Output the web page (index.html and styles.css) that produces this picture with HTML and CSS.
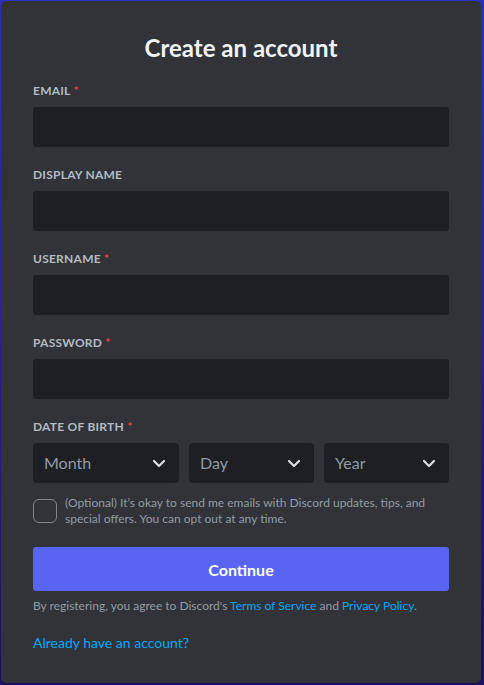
FILE: index.html
```html
<!DOCTYPE html>
<html lang="en">
<head>
    <meta charset="UTF-8">
    <meta name="viewport" content="width=device-width, initial-scale=1.0">
    <title>Create an account</title>
    <link rel="stylesheet" href="styles.css">
</head>
<body>

<div class="card">
    <h1>Create an account</h1>

    <div class="field">
        <label>Email <span class="req">*</span></label>
        <input type="email" class="text-input">
    </div>

    <div class="field">
        <label>Display Name</label>
        <input type="text" class="text-input">
    </div>

    <div class="field">
        <label>Username <span class="req">*</span></label>
        <input type="text" class="text-input">
    </div>

    <div class="field">
        <label>Password <span class="req">*</span></label>
        <input type="password" class="text-input">
    </div>

    <div class="field">
        <label>Date of Birth <span class="req">*</span></label>
        <div class="dob">
            <div class="select month">
                <span>Month</span>
                <svg width="24" height="24" viewBox="0 0 24 24"><path d="M7 10l5 5 5-5" fill="none" stroke="#dbdee1" stroke-width="2.2" stroke-linecap="round" stroke-linejoin="round"/></svg>
            </div>
            <div class="select">
                <span>Day</span>
                <svg width="24" height="24" viewBox="0 0 24 24"><path d="M7 10l5 5 5-5" fill="none" stroke="#dbdee1" stroke-width="2.2" stroke-linecap="round" stroke-linejoin="round"/></svg>
            </div>
            <div class="select">
                <span>Year</span>
                <svg width="24" height="24" viewBox="0 0 24 24"><path d="M7 10l5 5 5-5" fill="none" stroke="#dbdee1" stroke-width="2.2" stroke-linecap="round" stroke-linejoin="round"/></svg>
            </div>
        </div>
    </div>

    <div class="optin">
        <div class="checkbox"></div>
        <p>(Optional) It’s okay to send me emails with Discord updates, tips, and special offers. You can opt out at any time.</p>
    </div>

    <button class="continue">Continue</button>

    <p class="terms">By registering, you agree to Discord's <a href="#">Terms of Service</a> and <a href="#">Privacy Policy</a>.</p>

    <a href="#" class="login-link">Already have an account?</a>
</div>

</body>
</html>
```

FILE: styles.css
```css
body {
    margin: 0;
    height: 685px;
    font-family: 'Lato', 'Noto Sans', sans-serif;
    background: linear-gradient(180deg, #2b2ebd 0%, #2a1f96 50%, #1c1060 100%);
    overflow: hidden;
}
.card {
    margin: 1px 3px 0 1px;
    height: 682px;
    box-sizing: border-box;
    padding: 32px 32px;
    background-color: #313338;
    border-radius: 5px;
}
h1 {
    margin: 0 0 20px;
    font-size: 24px;
    line-height: 30px;
    font-weight: 700;
    color: #f2f3f5;
    text-align: center;
}
.field {
    margin-bottom: 20px;
}
label {
    display: block;
    margin-bottom: 8px;
    font-size: 12px;
    line-height: 16px;
    font-weight: 700;
    text-transform: uppercase;
    letter-spacing: 0.02em;
    color: #b5bac1;
}
.req {
    color: #f23f42;
}
.text-input {
    display: block;
    width: 100%;
    height: 40px;
    box-sizing: border-box;
    border: none;
    border-radius: 3px;
    background-color: #1e1f22;
    outline: none;
}
.dob {
    display: flex;
    gap: 10px;
}
.select {
    flex: 0 0 125px;
    height: 40px;
    box-sizing: border-box;
    padding: 0 8px 2px 11px;
    display: flex;
    align-items: center;
    justify-content: space-between;
    background-color: #1e1f22;
    border-radius: 4px;
    font-size: 16px;
    color: #949ba4;
}
.select svg {
    margin-top: 2px;
}
.select.month {
    flex: 0 0 146px;
}
.optin {
    display: flex;
    align-items: center;
    gap: 8px;
    margin-top: -8px;
}
.checkbox {
    flex: 0 0 auto;
    width: 24px;
    height: 24px;
    box-sizing: border-box;
    border: 1px solid #80848e;
    border-radius: 6px;
}
.optin p {
    margin: 0;
    font-size: 12px;
    line-height: 16px;
    color: #949ba4;
}
.continue {
    display: block;
    width: 100%;
    height: 44px;
    margin-top: 20px;
    border: none;
    border-radius: 3px;
    background-color: #5865f2;
    color: #ffffff;
    font-family: inherit;
    font-size: 16px;
    font-weight: 700;
}
.terms {
    margin: 7px 0 0;
    font-size: 12px;
    line-height: 16px;
    color: #949ba4;
}
.terms a {
    color: #00a8fc;
    text-decoration: none;
}
.login-link {
    display: inline-block;
    margin-top: 20px;
    font-size: 14px;
    line-height: 18px;
    color: #00a8fc;
    text-decoration: none;
}
```
